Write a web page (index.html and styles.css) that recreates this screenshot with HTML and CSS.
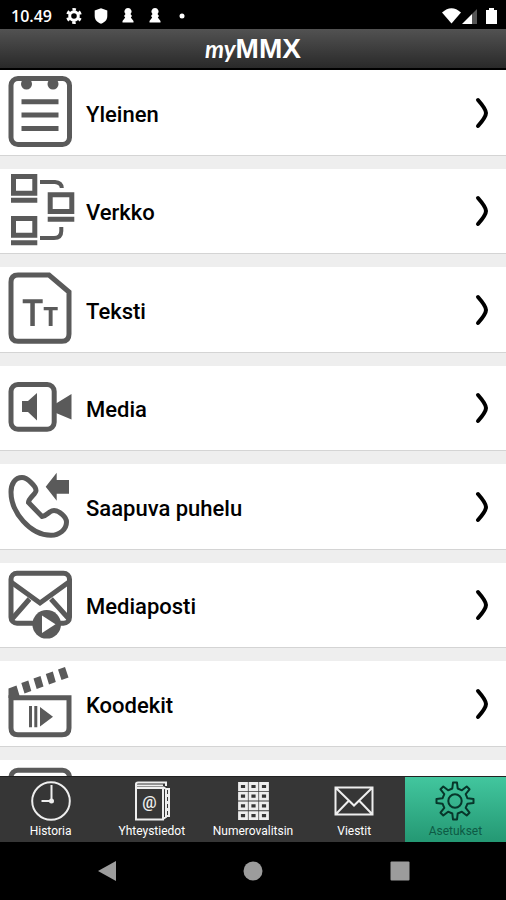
FILE: index.html
```html
<!DOCTYPE html>
<html lang="fi">
<head>
<meta charset="utf-8">
<meta name="viewport" content="width=device-width, initial-scale=1">
<title>myMMX</title>
<link rel="stylesheet" href="styles.css">
</head>
<body>
<div class="status">
  <span class="clock">10.49</span>
  <svg class="sicon" viewBox="0 0 16 16"><g fill="none" stroke="#fff"><circle cx="8" cy="8" r="4.3" stroke-width="3"/><circle cx="8" cy="8" r="6.6" stroke-width="2.6" stroke-dasharray="3.4 3.51" stroke-dashoffset="1.7" transform="rotate(30 8 8)"/></g></svg>
  <svg class="sicon" viewBox="0 0 16 16"><path fill="#fff" d="M8 0.300L14.300 2.500V8C14.300 12 11.500 14.500 8 15.700C4.500 14.500 1.700 12 1.700 8V2.500Z"/></svg>
  <svg class="sicon" viewBox="0 0 16 16"><path fill="#fff" d="M8 0A3.500 3.500 0 0 1 10.500 6L12 8L10.800 9.500L13.500 13V14.500H2.500V13L5.200 9.500L4 8L5.500 6A3.500 3.500 0 0 1 8 0Z"/></svg>
  <svg class="sicon" viewBox="0 0 16 16"><path fill="#fff" d="M8 0A3.500 3.500 0 0 1 10.500 6L12 8L10.800 9.500L13.500 13V14.500H2.500V13L5.200 9.500L4 8L5.500 6A3.500 3.500 0 0 1 8 0Z"/></svg>
  <svg class="sicon" viewBox="0 0 16 16"><circle cx="8" cy="8" r="2.500" fill="#fff"/></svg>
  <svg class="signals" viewBox="0 0 56 18"><path fill="#fff" d="M0 5.500Q9.500 -3 19 5.500L9.500 16.500Z"/><path fill="#fff" d="M20 17L30 7V17Z"/><path fill="#555" d="M30 7L35 2V17H30Z"/><path fill="#fff" d="M44 3H47V1H52V3H55V17H44Z"/></svg>
</div>
<header class="header"><h1 class="logo"><span class="my">my</span>MMX</h1></header>
<main class="list">
  <a class="row" href="#yleinen">
    <svg class="icon" viewBox="0 0 68 77"><rect x="3" y="4.500" width="58.500" height="66" rx="7"/><path d="M13.500 27.700H50.500M13.500 41H50.500M13.500 54.500H50.500"/><g class="solid"><circle cx="18.500" cy="10" r="5.500"/><circle cx="45" cy="10" r="5.500"/></g></svg>
    <span class="name">Yleinen</span><svg class="arrow" viewBox="0 0 16 34"><path d="M4 4Q12 13 12 17T4 30"/></svg>
  </a>
  <a class="row" href="#verkko">
    <svg class="icon" viewBox="0 0 68 77"><path d="M5.500 3.500H26.800V20.200H5.500ZM3 27.300H29.300M42.200 21.800H63.800V38.500H42.200ZM39.700 46.200H66.300M5.500 45.500H26.800V62.200H5.500ZM3 69.700H29.300"/><path class="thin" d="M32 9H47Q53.500 9.500 53.800 15M32 65H46Q53.300 65 53.300 58V54"/></svg>
    <span class="name">Verkko</span><svg class="arrow" viewBox="0 0 16 34"><path d="M4 4Q12 13 12 17T4 30"/></svg>
  </a>
  <a class="row" href="#teksti">
    <svg class="icon" viewBox="0 0 68 77"><path d="M10 4H41L61 21V63Q61 70.300 54 70.300H10Q3 70.300 3 63V11Q3 4 10 4Z"/><path class="solid" d="M14.700 28.300H34.700V32.300H26.800V55H22.300V32.300H14.700ZM35.700 36H49.700V39.300H44.600V55H40.700V39.300H35.700Z"/></svg>
    <span class="name">Teksti</span><svg class="arrow" viewBox="0 0 16 34"><path d="M4 4Q12 13 12 17T4 30"/></svg>
  </a>
  <a class="row" href="#media">
    <svg class="icon" viewBox="0 0 68 77"><rect x="3" y="14.500" width="43.200" height="44.700" rx="7"/><path class="solid" d="M14 31H20L29 23V50.500L20 42H14ZM48 33.500L63.500 24V49.500L48 43Z"/></svg>
    <span class="name">Media</span><svg class="arrow" viewBox="0 0 16 34"><path d="M4 4Q12 13 12 17T4 30"/></svg>
  </a>
  <a class="row" href="#saapuva">
    <svg class="icon" viewBox="0 0 68 77"><path d="M3 24C3 16 7 9.500 14 9.500C19 9.500 28 18 28 22.500C28 26 20.500 30 20.500 34.500L34 48.500C39 48 41 42.500 46 42.500C51 42.500 58.500 49 58.500 54C58.500 62 51 67.300 43 67.300C22 67.300 3 44 3 24Z"/><path class="solid" d="M37.700 18.700L48.700 4.700V12H61V25.700H48.700V32.700Z"/></svg>
    <span class="name">Saapuva puhelu</span><svg class="arrow" viewBox="0 0 16 34"><path d="M4 4Q12 13 12 17T4 30"/></svg>
  </a>
  <a class="row" href="#mediaposti">
    <svg class="icon" viewBox="0 0 68 77"><rect x="3" y="6.200" width="58.500" height="50" rx="6"/><path d="M3 15L32 36L61 15M4 52L21.500 32M43 32L61 52"/><circle class="solid" cx="38.700" cy="57.300" r="14.300"/><path class="white" d="M34 48.500V66L47.500 57.300Z"/></svg>
    <span class="name">Mediaposti</span><svg class="arrow" viewBox="0 0 16 34"><path d="M4 4Q12 13 12 17T4 30"/></svg>
  </a>
  <a class="row" href="#koodekit">
    <svg class="icon" viewBox="0 0 68 77"><path d="M3 32.800H61V63Q61 69.800 54 69.800H10Q3 69.800 3 63Z"/><path class="solid" d="M0.500 33V23.500L8.500 20.500L11.500 30.500V34ZM13.300 18L20.300 15.500L23.300 26L16.500 28.500ZM25.500 13.500L32.500 11L35.500 21.500L28.700 24ZM37.800 9L44.800 6.500L47.800 17L41 19.500ZM50 4.500L57 2L60.500 12.500L53.500 15ZM21 41H24V62.300H21ZM26.300 41H29.300V62.300H26.300ZM32 42L45 51.700L32 61.500Z"/></svg>
    <span class="name">Koodekit</span><svg class="arrow" viewBox="0 0 16 34"><path d="M4 4Q12 13 12 17T4 30"/></svg>
  </a>
  <a class="row" href="#muut" aria-label="Muut">
    <svg class="icon" viewBox="0 0 68 77"><rect x="3" y="6.200" width="58.500" height="64" rx="7"/></svg>
  </a>
</main>
<nav class="tabs">
  <a class="tab" href="#historia"><svg class="ticon" viewBox="0 0 40 40"><circle cx="20" cy="20" r="18.800"/><path d="M20.500 4V20H10.500"/><circle cx="20.500" cy="20" r="1.500"/></svg><span>Historia</span></a>
  <a class="tab" href="#yhteystiedot"><svg class="ticon" viewBox="0 0 40 40"><path d="M4 7V38.500H31V7ZM4 7V3Q4 1.500 6 1.500H34V5M4.500 4.500H31M31 6L34 8V36L31 38M34 8H37V14H34M34 15H37V21H34M34 22H37V28H34M34 29H37V35H34"/><text x="17.500" y="27">@</text></svg><span>Yhteystiedot</span></a>
  <a class="tab" href="#numerovalitsin"><svg class="ticon" viewBox="0 0 40 40"><path d="M6.500 2.500H13.500V8.500H6.500ZM17 2.500H24V8.500H17ZM27.500 2.500H34.500V8.500H27.500ZM6.500 12.200H13.500V18.200H6.500ZM17 12.200H24V18.200H17ZM27.500 12.200H34.500V18.200H27.500ZM6.500 21.900H13.500V27.900H6.500ZM17 21.900H24V27.900H17ZM27.500 21.900H34.500V27.900H27.500ZM6.500 31.600H13.500V37.600H6.500ZM17 31.600H24V37.600H17ZM27.500 31.600H34.500V37.600H27.500Z" stroke-width="2.800"/></svg><span>Numerovalitsin</span></a>
  <a class="tab" href="#viestit"><svg class="ticon" viewBox="0 0 40 40"><path d="M1.500 6.500H38.500V33.500H1.500ZM1.500 6.500L20 24.500L38.500 6.500M1.500 33.500L14.500 20M38.500 33.500L25.500 20"/></svg><span>Viestit</span></a>
  <a class="tab active" href="#asetukset" aria-current="page"><svg class="ticon" viewBox="0 0 40 40"><circle cx="20" cy="20" r="6.700"/><path d="M17.300 7.500L18 1.500H22L22.700 7.500L26.900 9.300L31.700 5.500L34.500 8.300L30.700 13.100L32.500 17.300L38.500 18V22L32.500 22.700L30.700 26.900L34.500 31.700L31.700 34.500L26.900 30.700L22.700 32.500L22 38.500H18L17.300 32.500L13.100 30.700L8.300 34.500L5.500 31.700L9.300 26.900L7.500 22.700L1.500 22V18L7.500 17.300L9.300 13.100L5.500 8.300L8.300 5.500L13.100 9.300Z" stroke-linejoin="round"/></svg><span>Asetukset</span></a>
</nav>
<div class="system">
  <button class="key" aria-label="Takaisin"><svg viewBox="0 0 20 22"><path d="M1 11L19 1V21Z"/></svg></button>
  <button class="key" aria-label="Koti"><svg viewBox="0 0 20 22"><circle cx="10" cy="11" r="9.500"/></svg></button>
  <button class="key" aria-label="Viimeisimmät"><svg viewBox="0 0 20 22"><rect x="0.500" y="1.500" width="19" height="19" rx="1"/></svg></button>
</div>
</body>
</html>
```
FILE: styles.css
```css
* { box-sizing: border-box; }
body {
  margin: 0;
  height: 100vh;
  display: flex;
  flex-direction: column;
  background: #000;
  font-family: Roboto, "Liberation Sans", sans-serif;
}
svg { display: block; flex: none; }
a { color: inherit; text-decoration: none; }

.status {
  flex: none;
  height: 29px;
  display: flex;
  align-items: center;
  gap: 11px;
  padding: 2px 8px 0 11px;
  color: #fff;
}
.clock { font: 600 16px/20px "Open Sans", sans-serif; margin-right: 3px; }
.sicon { width: 16px; height: 16px; }
.signals { width: 56px; height: 18px; margin-left: auto; }

.header {
  flex: none;
  height: 41px;
  display: flex;
  justify-content: center;
  background: linear-gradient(#525252, #292929);
  border-bottom: 2px solid #000;
}
.logo {
  margin: 0;
  color: #fff;
  font: 700 28px/40px "Liberation Sans", sans-serif;
}
.my { font: italic 700 24px/36px Lato, sans-serif; }

.list {
  flex: 1;
  min-height: 0;
  overflow: hidden;
  display: flex;
  flex-direction: column;
  gap: 13px;
  background: #eee;
}
.row {
  flex: none;
  height: 86px;
  display: flex;
  align-items: center;
  gap: 10px;
  padding: 0 16px 0 8px;
  background: #fff;
  border-bottom: 1px solid #d4d4d4;
}
.row:nth-child(even) { height: 85px; }
.icon {
  width: 68px;
  height: 77px;
  fill: none;
  stroke: #5a5a5a;
  stroke-width: 5;
}
.icon .thin { stroke-width: 4; }
.icon .solid { fill: #5a5a5a; stroke: none; }
.icon .white { fill: #fff; stroke: none; }
.name { flex: 1; color: #000; font-size: 22px; font-weight: 500; line-height: 28px; padding-top: 4px; }
.arrow {
  width: 16px;
  height: 34px;
  fill: none;
  stroke: #000;
  stroke-width: 4;
  stroke-linecap: round;
}

.tabs {
  flex: none;
  height: 66px;
  display: grid;
  grid-template-columns: repeat(5, 1fr);
  background: #363636;
  border-top: 1px solid #222;
}
.tab {
  display: flex;
  flex-direction: column;
  align-items: center;
  gap: 2px;
  padding-top: 4px;
  color: #fff;
  font-size: 12px;
  line-height: 16px;
}
.ticon { width: 40px; height: 40px; fill: none; stroke: #eee; stroke-width: 2; }
.ticon text { fill: #eee; stroke: none; font-size: 16px; font-weight: 500; text-anchor: middle; }
.active { color: #0d5a44; background: linear-gradient(#42c69e, #249873); }
.active .ticon { stroke: #07362a; }

.system {
  flex: none;
  height: 58px;
  display: flex;
  justify-content: center;
  align-items: center;
  gap: 25%;
}
.key { padding: 0; border: 0; background: none; }
.key svg { width: 20px; height: 22px; fill: #9c9c9c; }
```
